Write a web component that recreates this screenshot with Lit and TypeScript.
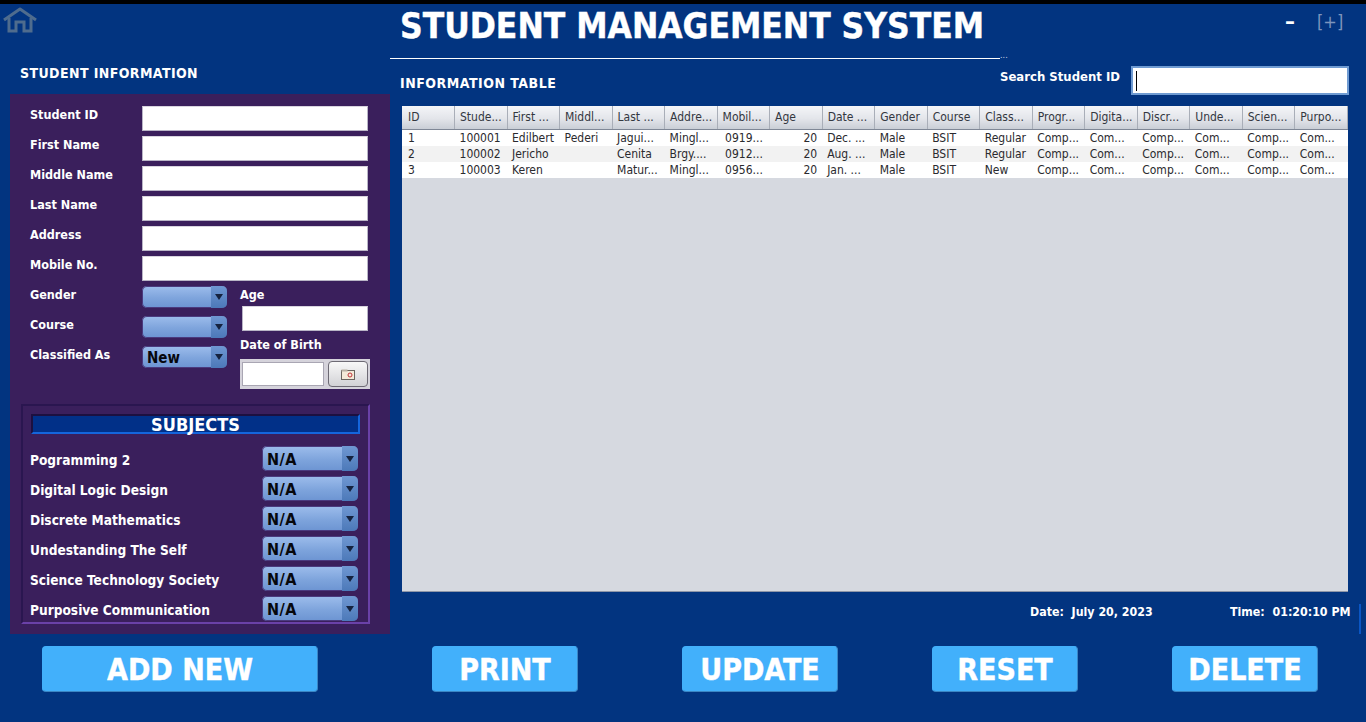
import { LitElement, html, css } from 'lit';
import { customElement } from 'lit/decorators.js';

const COLS = ['ID', 'Stude...', 'First ...', 'Middl...', 'Last ...', 'Addre...', 'Mobil...', 'Age', 'Date ...', 'Gender', 'Course', 'Class...', 'Progr...', 'Digita...', 'Discr...', 'Unde...', 'Scien...', 'Purpo...'];
const SUBJ = ['Comp...', 'Com...', 'Comp...', 'Com...', 'Comp...', 'Com...'];
const ROWS = [
  ['1', '100001', 'Edilbert', 'Pederi', 'Jagui...', 'Mingl...', '0919...', '20', 'Dec. ...', 'Male', 'BSIT', 'Regular', ...SUBJ],
  ['2', '100002', 'Jericho', '', 'Cenita', 'Brgy....', '0912...', '20', 'Aug. ...', 'Male', 'BSIT', 'Regular', ...SUBJ],
  ['3', '100003', 'Keren', '', 'Matur...', 'Mingl...', '0956...', '20', 'Jan. ...', 'Male', 'BSIT', 'New', ...SUBJ],
];
const TEXT_FIELDS = ['Student ID', 'First Name', 'Middle Name', 'Last Name', 'Address', 'Mobile No.'];
const SUBJECTS = ['Pogramming 2', 'Digital Logic Design', 'Discrete Mathematics', 'Undestanding The Self', 'Science Technology Society', 'Purposive Communication'];

@customElement('app-root')
export class AppRoot extends LitElement {
  static styles = css`
    :host {
      display: block;
      width: 1366px;
      height: 722px;
      overflow: hidden;
      background: #023480;
      color: #fff;
      font-family: "DejaVu Sans Condensed", "DejaVu Sans", sans-serif;
    }
    .topbar { height: 4px; background: #000; }

    .header { display: flex; height: 54px; }
    .home { width: 400px; padding: 3px 0 0 2px; box-sizing: border-box; }
    .home svg { display: block; }
    .title { flex: 1; font-size: 35px; font-weight: 700; line-height: 44px; white-space: nowrap; -webkit-text-stroke: 0.4px #fff; }
    .win { display: flex; width: 81px; padding-top: 8px; box-sizing: border-box; }
    .win .min { width: 32px; font-size: 22px; line-height: 20px; font-weight: 700; }
    .win .max { font-size: 18px; line-height: 20px; color: #7d95bd; }

    .body { display: grid; grid-template-columns: 390px 1fr; height: 576px; }

    .left { padding-left: 10px; }
    .left h2 { margin: 0; padding: 6px 0 0 10px; height: 29px; font-size: 14px; line-height: 17px; font-weight: 700; letter-spacing: 0.4px; margin-top: 1px; }
    .panel { width: 380px; height: 540px; background: #3a1f5c; box-sizing: border-box; padding: 12px 22px 0 20px; }
    .fields { display: grid; grid-template-columns: 112px 226px; row-gap: 5px; }
    .lab { font-size: 12.5px; font-weight: 700; line-height: 16px; white-space: nowrap; padding-top: 1px; }
    input {
      display: block;
      box-sizing: border-box;
      height: 25px;
      width: 100%;
      margin: 0;
      padding: 0 3px;
      background: #fff;
      border: 1px solid #b9b5c6;
      border-top-color: #d8d5df;
      border-radius: 0;
      outline: none;
    }

    .mid { display: grid; grid-template-columns: 112px 98px 130px; margin-top: 5px; }
    .mid-left { grid-column: 1 / 3; display: grid; grid-template-columns: 112px 85px; grid-auto-rows: 22px; row-gap: 8px; }
    .mid-left .lab { padding-top: 1px; }
    .mid-right { grid-column: 3; }
    .mid-right .lab { line-height: 14px; padding-top: 0; margin-top: 2px; }
    .age { width: 126px; margin: 4px 0 7px 2px; }
    .dob { display: flex; gap: 4px; align-items: center; width: 130px; height: 30px; margin-top: 7px; padding: 0 2px; box-sizing: border-box; background: #d5d3db; }
    .dob input { width: 82px; height: 24px; border-color: #a9a6b3; }
    .cal { display: flex; align-items: center; justify-content: center; width: 40px; height: 26px; box-sizing: border-box; border: 1px solid #6d6a74; border-radius: 4px; background: linear-gradient(#f8f8f8, #d2d2d6); }

    .combo { display: flex; height: 100%; border-radius: 5px; overflow: hidden; background: linear-gradient(#9dbdec, #7ea4dc 55%, #6c94d2); box-shadow: 0 0 0 1px #4a3a7e inset; color: #06070c; font-size: 15px; font-weight: 700; }
    .combo .val { flex: 1; padding-left: 5px; line-height: 24px; }
    .combo .arr { width: 16px; display: flex; align-items: center; justify-content: center; background: linear-gradient(#6f97d2, #4c79b9); }
    .combo .arr i { width: 0; height: 0; border: 4px solid transparent; border-top: 6px solid #16233f; border-bottom: 0; }

    .subjects { width: 349px; height: 220px; margin: 15px 0 0 -9px; box-sizing: border-box; border: 2px solid; border-color: #2a1650 #6a41a8 #6a41a8 #2a1650; padding: 8px 8px 0 8px; }
    .subjects h3 { margin: 0; height: 20px; width: 329px; box-sizing: border-box; background: #013088; border: 2px solid; border-color: #1c1040 #1565dc #1565dc #1c1040; text-align: center; font-size: 18px; line-height: 17px; font-weight: 700; }
    .subj-list { display: grid; grid-template-columns: 232px 96px; grid-auto-rows: 25px; row-gap: 5px; margin: 12px 0 0 -1px; }
    .subj-list .name { font-size: 13.6px; font-weight: 700; line-height: 28px; white-space: nowrap; }
    .subj-list .val { line-height: 28px; font-size: 16px; letter-spacing: 0.5px; }

    .right { display: flex; flex-direction: column; }
    .rule { display: flex; align-items: flex-end; height: 1px; }
    .rule b { display: block; width: 610px; height: 1px; background: #fff; }
    .rule span { font-size: 9px; line-height: 6px; height: 6px; margin-bottom: 1px; color: #c7d2e6; }
    .tools { display: flex; height: 47px; padding-left: 10px; }
    .tools h2 { margin: 0; padding-top: 16px; width: 600px; font-size: 14px; line-height: 17px; font-weight: 700; letter-spacing: 0.5px; }
    .search-lab { width: 131px; padding-top: 10px; font-size: 13px; line-height: 16px; font-weight: 700; white-space: nowrap; }
    .search { display: flex; align-items: center; width: 218px; height: 29px; margin-top: 7px; box-sizing: border-box; padding-left: 3px; background: #fff; border: 2px solid #6f9bd2; }
    .search i { width: 1px; height: 20px; background: #000; }

    .table-wrap { width: 946px; height: 486px; margin-left: 12px; background: #d6d9e0; border-bottom: 1px solid #8e96a8; box-sizing: border-box; }
    table { width: 100%; border-collapse: collapse; table-layout: fixed; font-size: 12px; color: #2a2a2e; }
    th { height: 23px; padding: 0 0 0 5px; box-sizing: border-box; font-weight: 400; text-align: left; background: linear-gradient(#f4f5f8, #e3e5ea 55%, #c9ced6); border-right: 1px solid #a9aeb8; border-bottom: 1px solid #7f8796; color: #33373f; white-space: nowrap; overflow: hidden; }
    td { height: 16px; padding: 0 0 0 5px; box-sizing: border-box; line-height: 16px; white-space: nowrap; overflow: hidden; background: #fff; }
    th:first-child, td:first-child { padding-left: 6px; }
    tr:nth-child(even) td { background: #f2f2f2; }
    td.num { text-align: right; padding-right: 5px; }
    td.mob { padding-left: 8px; }

    .status { display: flex; height: 42px; font-size: 12.3px; font-weight: 700; line-height: 16px; padding-top: 12px; box-sizing: border-box; }
    .status .date { margin-left: 640px; width: 200px; white-space: pre; }
    .status .time { width: 129px; white-space: pre; }
    .status .mark { width: 2px; height: 30px; background: #0a56c4; }

    .actions { display: flex; padding: 0 0 0 42px; margin-top: 12px; }
    .btn { height: 46px; box-sizing: border-box; display: flex; align-items: center; justify-content: center; background: #42b0fb; border-radius: 4px; border: 1px solid #3b86c4; border-top-color: #42b0fb; border-left-color: #42b0fb; font-size: 30px; font-weight: 700; color: #fff; -webkit-text-stroke: 0.4px #fff; }
    .add { width: 276px; }
    .print { width: 146px; margin-left: 114px; }
    .update { width: 156px; margin-left: 104px; }
    .reset { width: 146px; margin-left: 94px; }
    .delete { width: 146px; margin-left: 94px; }
  `;

  combo(value = '') {
    return html`<div class="combo"><span class="val">${value}</span><span class="arr"><i></i></span></div>`;
  }

  render() {
    return html`
      <div class="topbar"></div>
      <div class="header">
        <div class="home">
          <svg width="36" height="26" viewBox="0 0 36 26" fill="none" stroke="#4f6c8e" stroke-width="3">
            <path d="M2 13 L18 2 L34 13" stroke-linejoin="round"/>
            <path d="M7 11 V24 H14 V15 H22 V24 H29 V11"/>
          </svg>
        </div>
        <div class="title">STUDENT MANAGEMENT SYSTEM</div>
        <div class="win"><span class="min">–</span><span class="max">[+]</span></div>
      </div>
      <div class="body">
        <div class="left">
          <h2>STUDENT INFORMATION</h2>
          <div class="panel">
            <div class="fields">
              ${TEXT_FIELDS.map(f => html`<div class="lab">${f}</div><input type="text" />`)}
            </div>
            <div class="mid">
              <div class="mid-left">
                <div class="lab">Gender</div>${this.combo()}
                <div class="lab">Course</div>${this.combo()}
                <div class="lab">Classified As</div>${this.combo('New')}
              </div>
              <div class="mid-right">
                <div class="lab">Age</div>
                <input class="age" type="text" />
                <div class="lab">Date of Birth</div>
                <div class="dob">
                  <input type="text" />
                  <div class="cal">
                    <svg width="14" height="11" viewBox="0 0 14 11">
                      <rect x="0.5" y="1.5" width="13" height="9" fill="#f4ead8" stroke="#6b6660"/>
                      <rect x="0.5" y="0.5" width="6" height="2" fill="#b9b1a4"/>
                      <circle cx="9" cy="6" r="2" fill="none" stroke="#c0343a"/>
                    </svg>
                  </div>
                </div>
              </div>
            </div>
            <div class="subjects">
              <h3>SUBJECTS</h3>
              <div class="subj-list">
                ${SUBJECTS.map(s => html`<div class="name">${s}</div>${this.combo('N/A')}`)}
              </div>
            </div>
          </div>
        </div>
        <div class="right">
          <div class="rule"><b></b><span>...</span></div>
          <div class="tools">
            <h2>INFORMATION TABLE</h2>
            <div class="search-lab">Search Student ID</div>
            <div class="search"><i></i></div>
          </div>
          <div class="table-wrap">
            <table>
              <thead><tr>${COLS.map(c => html`<th>${c}</th>`)}</tr></thead>
              <tbody>
                ${ROWS.map(r => html`<tr>${r.map((v, i) => html`<td class="${i === 7 ? 'num' : i === 6 ? 'mob' : ''}">${v}</td>`)}</tr>`)}
              </tbody>
            </table>
          </div>
          <div class="status">
            <div class="date">Date:  July 20, 2023</div>
            <div class="time">Time:  01:20:10 PM</div>
            <div class="mark"></div>
          </div>
        </div>
      </div>
      <div class="actions">
        <div class="btn add">ADD NEW</div>
        <div class="btn print">PRINT</div>
        <div class="btn update">UPDATE</div>
        <div class="btn reset">RESET</div>
        <div class="btn delete">DELETE</div>
      </div>
    `;
  }
}
